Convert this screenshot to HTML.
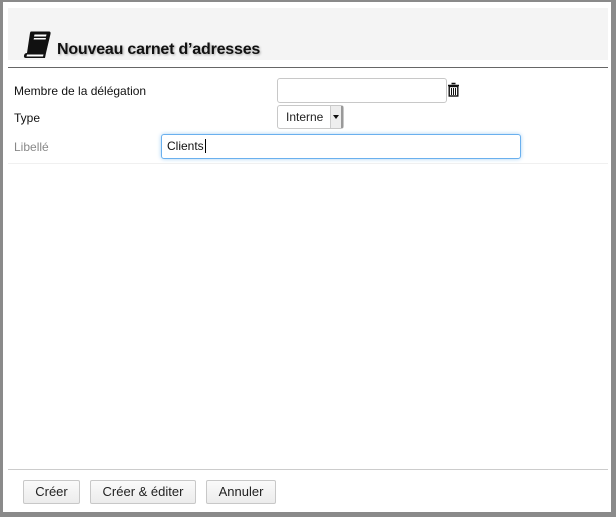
<!DOCTYPE html>
<html><head><style>
body{margin:0;width:616px;height:517px;background:#8a8a8a;font-family:"Liberation Sans",sans-serif;position:relative;overflow:hidden}
.win{position:absolute;left:3px;top:2px;width:608px;height:510px;background:#fff}
.hdr{position:absolute;left:8px;top:8px;width:600px;height:52px;background:#f4f4f4}
.title{position:absolute;left:57px;top:41px;font-size:16px;font-weight:bold;color:#111;text-shadow:1px 1px 2px #aaa;letter-spacing:-0.2px}
.line{position:absolute;left:8px;top:67px;width:600px;height:1px;background:#666}
.lbl{position:absolute;left:14px;font-size:12px;color:#111}
.inp{position:absolute;border:1px solid #c8c8c8;border-radius:3px;background:#fff;box-sizing:border-box}
.btn{position:absolute;top:480px;height:24px;border:1px solid #c8c8c8;border-radius:2px;background:linear-gradient(#fafafa,#ececec);font-size:13px;color:#222;text-align:center;line-height:22px;box-sizing:border-box}
</style></head><body>
<div class="win"></div>
<div class="hdr"></div>
<svg style="position:absolute;left:22px;top:30px" width="30" height="30" viewBox="0 0 30 30">
<path d="M9 1.5 H27 Q29 1.5 28.5 4 L24 23 H5 L8 3 Q8.3 1.5 9 1.5 Z" fill="#111"/>
<path d="M5 23 H24 L23 28 H4 Q1.5 28 2 25.5 Q2.5 23 5 23 Z" fill="#111"/>
<path d="M5 24.5 H21.5 L21 26.5 H4.5 Z" fill="#fff"/>
<path d="M12.5 4.5 H24.5 L24 6.5 H12 Z M12 8 H24 L23.6 9.5 H11.6 Z" fill="#fff"/>
</svg>
<div class="title">Nouveau carnet d’adresses</div>
<div class="line"></div>
<div class="lbl" style="top:84px">Membre de la délégation</div>
<div class="inp" style="left:277px;top:78px;width:170px;height:25px"></div>
<svg style="position:absolute;left:447px;top:82px" width="13" height="15" viewBox="0 0 13 15">
<path d="M4.5 1.5h4M1 3.5h11" stroke="#111" stroke-width="1.5" fill="none"/>
<rect x="2.2" y="4.5" width="8.6" height="9.5" fill="none" stroke="#111" stroke-width="1.4"/>
<path d="M4.5 6v7M6.5 6v7M8.5 6v7" stroke="#111" stroke-width="1"/>
</svg>
<div class="lbl" style="top:111px">Type</div>
<div class="inp" style="left:277px;top:105px;width:67px;height:24px;font-size:12px;line-height:22px;padding-left:8px;color:#222">Interne
<div style="position:absolute;right:0;top:0;width:10px;height:22px;background:#eee;border-left:1px solid #ccc;border-right:2px solid #999"><div style="position:absolute;left:2px;top:9px;border:3px solid transparent;border-top:4px solid #111;border-bottom:0"></div></div></div>
<div class="lbl" style="top:140px;color:#888">Libellé</div>
<div class="inp" style="left:161px;top:134px;width:360px;height:25px;border-color:#6ab0ee;box-shadow:0 0 4px #a8d2f5;font-size:12px;line-height:23px;padding-left:5px;color:#111">Clients<span style="border-left:1px solid #000;margin-left:1px"></span></div>
<div style="position:absolute;left:8px;top:163px;width:600px;height:1px;background:#f0f0f0"></div>
<div style="position:absolute;left:8px;top:469px;width:600px;height:1px;background:#ccc"></div>
<div class="btn" style="left:23px;width:57px">Créer</div>
<div class="btn" style="left:90px;width:106px">Créer &amp; éditer</div>
<div class="btn" style="left:206px;width:70px">Annuler</div>
</body></html>
